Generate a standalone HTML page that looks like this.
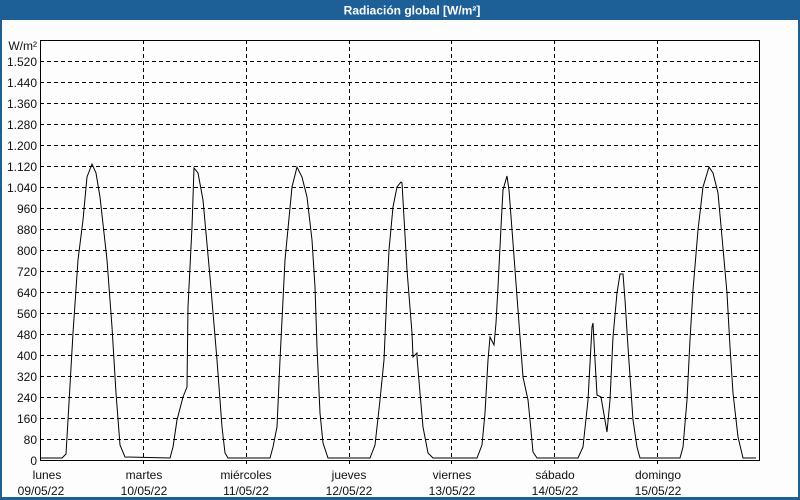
<!DOCTYPE html>
<html><head><meta charset="utf-8"><style>
html,body{margin:0;padding:0;width:800px;height:500px;overflow:hidden;background:#fff}
</style></head><body>
<svg width="800" height="500" xmlns="http://www.w3.org/2000/svg" font-family="Liberation Sans, Tahoma, sans-serif">
<rect x="0" y="0" width="800" height="500" fill="#1d5f97"/>
<rect x="2" y="20" width="796" height="477" fill="#fdfdfd"/>
<text x="412" y="14.5" fill="#fff" font-size="12" font-weight="bold" text-anchor="middle">Radiación global [W/m²]</text>
<g stroke="#000" stroke-width="1" stroke-dasharray="4,3" shape-rendering="crispEdges">
<line x1="40" y1="61.5" x2="760" y2="61.5"/><line x1="40" y1="82.5" x2="760" y2="82.5"/><line x1="40" y1="103.5" x2="760" y2="103.5"/><line x1="40" y1="124.5" x2="760" y2="124.5"/><line x1="40" y1="145.5" x2="760" y2="145.5"/><line x1="40" y1="166.5" x2="760" y2="166.5"/><line x1="40" y1="187.5" x2="760" y2="187.5"/><line x1="40" y1="208.5" x2="760" y2="208.5"/><line x1="40" y1="229.5" x2="760" y2="229.5"/><line x1="40" y1="250.5" x2="760" y2="250.5"/><line x1="40" y1="271.5" x2="760" y2="271.5"/><line x1="40" y1="292.5" x2="760" y2="292.5"/><line x1="40" y1="313.5" x2="760" y2="313.5"/><line x1="40" y1="334.5" x2="760" y2="334.5"/><line x1="40" y1="355.5" x2="760" y2="355.5"/><line x1="40" y1="376.5" x2="760" y2="376.5"/><line x1="40" y1="397.5" x2="760" y2="397.5"/><line x1="40" y1="418.5" x2="760" y2="418.5"/><line x1="40" y1="439.5" x2="760" y2="439.5"/>
<line x1="143.5" y1="40" x2="143.5" y2="465"/><line x1="246.5" y1="40" x2="246.5" y2="465"/><line x1="349.5" y1="40" x2="349.5" y2="465"/><line x1="451.5" y1="40" x2="451.5" y2="465"/><line x1="554.5" y1="40" x2="554.5" y2="465"/><line x1="657.5" y1="40" x2="657.5" y2="465"/>
</g>
<rect x="40.5" y="40.5" width="719" height="420" fill="none" stroke="#000" shape-rendering="crispEdges"/>
<g font-size="12" fill="#111" text-anchor="end">
<text x="37" y="50">W/m²</text>
<text x="37" y="66">1.520</text><text x="37" y="87">1.440</text><text x="37" y="108">1.360</text><text x="37" y="129">1.280</text><text x="37" y="150">1.200</text><text x="37" y="171">1.120</text><text x="37" y="192">1.040</text><text x="37" y="213">960</text><text x="37" y="234">880</text><text x="37" y="255">800</text><text x="37" y="276">720</text><text x="37" y="297">640</text><text x="37" y="318">560</text><text x="37" y="339">480</text><text x="37" y="360">400</text><text x="37" y="381">320</text><text x="37" y="402">240</text><text x="37" y="423">160</text><text x="37" y="444">80</text><text x="37" y="465">0</text>
</g>
<g font-size="12" fill="#111" text-anchor="middle">
<text x="47" y="479">lunes</text><text x="41" y="495">09/05/22</text>
<text x="144" y="479">martes</text><text x="144" y="495">10/05/22</text>
<text x="246" y="479">miércoles</text><text x="246" y="495">11/05/22</text>
<text x="349" y="479">jueves</text><text x="349" y="495">12/05/22</text>
<text x="452" y="479">viernes</text><text x="452" y="495">13/05/22</text>
<text x="555" y="479">sábado</text><text x="555" y="495">14/05/22</text>
<text x="658" y="479">domingo</text><text x="658" y="495">15/05/22</text>
</g>
<polyline fill="none" stroke="#000" stroke-width="1" points="
40,458 62,458 66,454 68,420 73,333 78,260 83,220 87,177 92,164 96,173 100,197 107,260 112,327 116,393 120,445 125,457 170,458
173,447 177,420 183,397 187,387 188,307 192,227 194,168 198,173 203,200 210,277 217,360 222,427 225,453 228,458 270,458
273,447 277,427 280,360 285,260 292,187 297,167 302,177 307,197 312,240 315,287 317,347 320,413 323,443 328,458 370,458
375,445 380,400 384,360 387,290 389,250 393,207 397,187 401,182 402,183 407,270 412,333 413,357 415,355 417,353 417,357 420,393 423,427 428,453 433,458 477,458
482,445 485,413 488,360 490,337 494,345 496,323 498,287 501,227 503,190 507,176 509,190 513,243 518,310 523,377 528,400 530,420 533,452 537,458 578,458
583,447 588,400 592,327 593,323 595,360 597,395 601,397 607,432 610,400 613,337 617,293 620,274 623,274 625,300 628,347 633,420 637,447 640,458 680,458
683,447 687,400 690,340 693,290 698,230 703,187 709,167 713,173 718,193 722,237 727,293 730,347 733,393 738,437 743,458 756,458"/>
</svg>
</body></html>
